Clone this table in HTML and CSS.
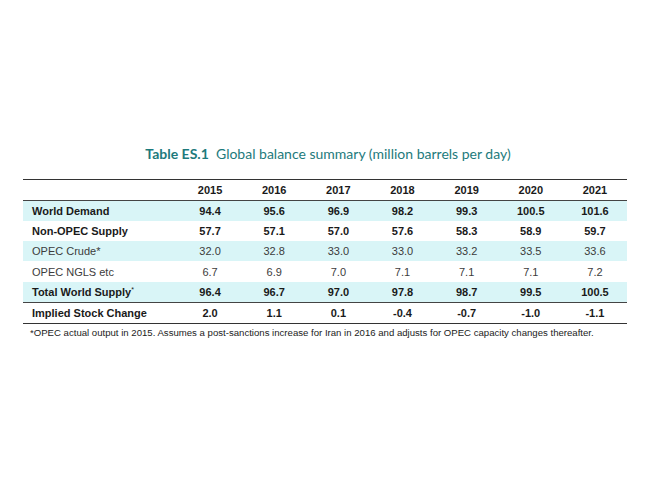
FILE: index.html
```html
<!DOCTYPE html>
<html>
<head>
<meta charset="utf-8">
<link rel="stylesheet" href="styles.css">
</head>
<body>
<div class="page">
  <h1 class="title"><b>Table ES.1</b>&nbsp; Global balance summary (million barrels per day)</h1>
  <table class="tbl">
    <thead>
      <tr><th class="lbl"></th><th>2015</th><th>2016</th><th>2017</th><th>2018</th><th>2019</th><th>2020</th><th>2021</th></tr>
    </thead>
    <tbody>
      <tr class="hl bold"><td class="lbl">World Demand</td><td>94.4</td><td>95.6</td><td>96.9</td><td>98.2</td><td>99.3</td><td>100.5</td><td>101.6</td></tr>
      <tr class="bold"><td class="lbl">Non-OPEC Supply</td><td>57.7</td><td>57.1</td><td>57.0</td><td>57.6</td><td>58.3</td><td>58.9</td><td>59.7</td></tr>
      <tr class="hl"><td class="lbl">OPEC Crude*</td><td>32.0</td><td>32.8</td><td>33.0</td><td>33.0</td><td>33.2</td><td>33.5</td><td>33.6</td></tr>
      <tr><td class="lbl">OPEC NGLS etc</td><td>6.7</td><td>6.9</td><td>7.0</td><td>7.1</td><td>7.1</td><td>7.1</td><td>7.2</td></tr>
      <tr class="hl bold"><td class="lbl">Total World Supply<sup>*</sup></td><td>96.4</td><td>96.7</td><td>97.0</td><td>97.8</td><td>98.7</td><td>99.5</td><td>100.5</td></tr>
      <tr class="bold last"><td class="lbl">Implied Stock Change</td><td>2.0</td><td>1.1</td><td>0.1</td><td>-0.4</td><td>-0.7</td><td>-1.0</td><td>-1.1</td></tr>
    </tbody>
  </table>
  <p class="note">*OPEC actual output in 2015. Assumes a post-sanctions increase for Iran in 2016 and adjusts for OPEC capacity changes thereafter.</p>
</div>
</body>
</html>
```
FILE: styles.css
```css
html, body { margin: 0; padding: 0; background: #fff; }
.page { padding: 143px 0 0 23px; width: 604px; }
.title {
  margin: 0;
  text-align: center;
  font-family: Lato, "Open Sans", sans-serif;
  font-weight: 400;
  font-size: 14px;
  color: #1d7a7c;
  line-height: 22px;
  height: 36px;
  padding-left: 6px;
}
.title b { font-weight: 700; }
.tbl {
  border-collapse: collapse;
  width: 604px;
  table-layout: fixed;
  font-family: "Liberation Sans", Arial, sans-serif;
  font-size: 11px;
  color: #3c3c3c;
  border-top: 1.5px solid #333;
  border-bottom: 1.5px solid #333;
}
.tbl th, .tbl td {
  text-align: center;
  padding: 0;
  height: 20.3px;
}
.tbl th { height: 19.5px; font-weight: 700; color: #1a1a1a; border-bottom: 1px solid #444; }
.tbl .lbl { width: 146px; text-align: left; padding-left: 9px; }
.tbl tr.hl td { background: #d9f5f7; }
.tbl tr.bold td { font-weight: 700; color: #1a1a1a; }
.tbl tr.last td { border-top: 1px solid #444; }
.tbl sup { font-size: 7px; font-weight: 400; vertical-align: 4px; line-height: 0; }
.note {
  margin: 3px 0 0 7px;
  font-family: "Liberation Sans", Arial, sans-serif;
  font-size: 9.6px;
  color: #222;
}
```
